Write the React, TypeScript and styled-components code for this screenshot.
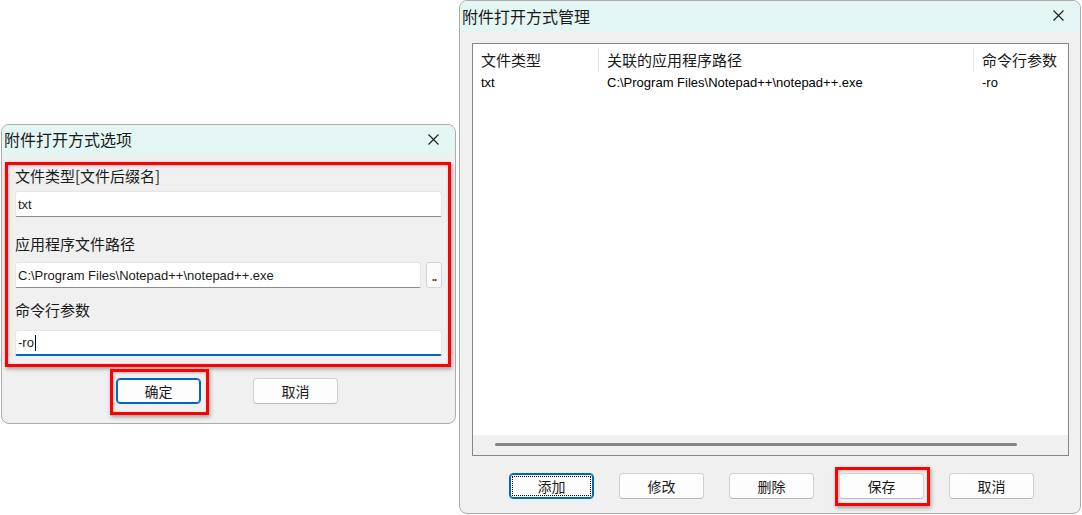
import React from 'react';
import styled, { createGlobalStyle } from 'styled-components';

const GlobalStyle = createGlobalStyle`
  html, body {
    margin: 0;
    padding: 0;
    background: #ffffff;
    overflow: hidden;
  }
  body {
    font-family: "Noto Sans CJK SC", "Liberation Sans", sans-serif;
    color: #1a1a1a;
  }
  * { box-sizing: border-box; }
`;

const Page = styled.div`
  display: flex;
  align-items: flex-start;
  gap: 3px;
  padding-left: 1px;
  width: 1082px;
  height: 515px;
`;

const Dialog = styled.div<{ $w: number; $h: number; $top?: number }>`
  display: flex;
  flex-direction: column;
  width: ${p => p.$w}px;
  height: ${p => p.$h}px;
  margin-top: ${p => p.$top ?? 0}px;
  background: #f0f0f0;
  border: 1px solid #ababab;
  border-radius: 8px;
  overflow: hidden;
`;

const TitleBar = styled.div<{ $h: number }>`
  display: flex;
  align-items: center;
  justify-content: space-between;
  flex-shrink: 0;
  height: ${p => p.$h}px;
  padding: 0 16px 2px 2px;
  background: #e4f6f4;
`;

const Title = styled.span`
  font-size: 16px;
  line-height: 20px;
  color: #1a1a1a;
`;

const CloseIcon = () => (
  <svg width="11" height="11" viewBox="0 0 11 11">
    <path d="M0.5 0.5 L10.5 10.5 M10.5 0.5 L0.5 10.5" stroke="#1b1b1b" strokeWidth="1.1" fill="none" />
  </svg>
);

/* red annotation frames */
const Frame = styled.div`
  border: 3px solid #ff0000;
  box-shadow: 1px 2px 4px rgba(0, 0, 0, 0.35), inset 1px 1px 3px rgba(0, 0, 0, 0.22);
`;

const FieldGroup = styled(Frame)`
  display: flex;
  flex-direction: column;
  margin: 7px 4px 0 3px;
  padding: 0 6px 8px 7px;
`;

// frame around a single button; negative margins keep the button where it sits
const Mark = styled(Frame)<{ $t: number; $r: number; $b: number; $l: number }>`
  padding: ${p => `${p.$t}px ${p.$r}px ${p.$b}px ${p.$l}px`};
  margin: ${p => `-${p.$t + 3}px -${p.$r + 3}px -${p.$b + 3}px -${p.$l + 3}px`};
`;

const Label = styled.div<{ $above: number; $below: number }>`
  margin-top: ${p => p.$above}px;
  margin-bottom: ${p => p.$below}px;
  font-size: 15px;
  line-height: 20px;
  color: #1a1a1a;
`;

const TextBox = styled.div<{ $focused?: boolean }>`
  flex: 1;
  display: flex;
  align-items: center;
  height: 26px;
  padding: 0 2px;
  background: #ffffff;
  border: 1px solid #e6e6e6;
  border-bottom: ${p => (p.$focused ? '2px solid #0067c0' : '1px solid #8a8a8a')};
  border-radius: 3px 3px 2px 2px;
  font-family: "Liberation Sans", Arial, sans-serif;
  font-size: 13px;
  color: #1a1a1a;
  white-space: nowrap;
`;

const Caret = styled.span`
  display: inline-block;
  width: 1px;
  height: 16px;
  margin-left: 1px;
  background: #000000;
`;

const InputRow = styled.div`
  display: flex;
  gap: 5px;
`;

const BrowseButton = styled.div`
  display: flex;
  align-items: flex-end;
  justify-content: center;
  width: 16px;
  height: 26px;
  padding-bottom: 6px;
  background: #fbfbfb;
  border: 1px solid #d3d3d3;
  border-radius: 3px;
  font-family: "Liberation Sans", Arial, sans-serif;
  font-size: 12px;
  line-height: 8px;
  font-weight: bold;
  color: #6a4020;
  letter-spacing: -1px;
`;

const ButtonRow = styled.div<{ $top: number; $left: number; $gap: number }>`
  display: flex;
  align-items: flex-start;
  gap: ${p => p.$gap}px;
  margin-top: ${p => p.$top}px;
  padding-left: ${p => p.$left}px;
`;

const Button = styled.div<{ $focused?: boolean; $dotted?: boolean }>`
  display: flex;
  align-items: center;
  justify-content: center;
  width: 85px;
  height: 26px;
  padding-bottom: 1px;
  background: #fdfdfd;
  border: 1px solid ${p => (p.$focused ? '#0067c0' : '#d0d0d0')};
  border-bottom-color: ${p => (p.$focused ? '#0067c0' : '#b8b8b8')};
  border-radius: 4px;
  box-shadow: ${p => (p.$focused ? 'inset 0 0 0 1px #0067c0' : 'none')};
  outline: ${p => (p.$dotted ? '1px dotted #000000' : 'none')};
  outline-offset: -4px;
  font-size: 14px;
  line-height: 18px;
  color: #1a1a1a;
`;

/* list view of the management dialog */
const ListBox = styled.div`
  display: flex;
  flex-direction: column;
  height: 413px;
  margin: 11px 11px 0 12px;
  background: #ffffff;
  border: 1px solid #868686;
`;

const HeaderRow = styled.div`
  display: flex;
  padding-top: 4px;
`;

const HeaderCell = styled.div<{ $w?: number; $sep?: boolean }>`
  ${p => (p.$w ? `width: ${p.$w}px;` : 'flex: 1;')}
  height: 24px;
  padding-left: 8px;
  border-right: ${p => (p.$sep ? '1px solid #e5e5e5' : 'none')};
  font-size: 15px;
  line-height: 23px;
  color: #1a1a1a;
`;

const DataRow = styled.div`
  display: flex;
  margin-top: 2px;
  height: 18px;
`;

const DataCell = styled.div<{ $w?: number }>`
  ${p => (p.$w ? `width: ${p.$w}px;` : 'flex: 1;')}
  padding-left: 8px;
  font-family: "Liberation Sans", Arial, sans-serif;
  font-size: 13px;
  line-height: 18px;
  color: #000000;
  white-space: nowrap;
`;

const ListSpace = styled.div`
  flex: 1;
`;

const HScroll = styled.div`
  display: flex;
  height: 20px;
  padding: 8px 0 0 22px;
  background: #f0f0f0;
`;

const ScrollThumb = styled.div`
  width: 522px;
  height: 3px;
  border-radius: 2px;
  background: #858585;
`;

const OptionsDialog = () => (
  <Dialog $w={455} $h={300} $top={124}>
    <TitleBar $h={30}>
      <Title>附件打开方式选项</Title>
      <CloseIcon />
    </TitleBar>
    <FieldGroup>
      <Label $above={1} $below={5}>文件类型[文件后缀名]</Label>
      <InputRow>
        <TextBox>txt</TextBox>
      </InputRow>
      <Label $above={17} $below={8}>应用程序文件路径</Label>
      <InputRow>
        <TextBox>C:\Program Files\Notepad++\notepad++.exe</TextBox>
        <BrowseButton>..</BrowseButton>
      </InputRow>
      <Label $above={12} $below={10}>命令行参数</Label>
      <InputRow>
        <TextBox $focused>
          -ro<Caret />
        </TextBox>
      </InputRow>
    </FieldGroup>
    <ButtonRow $top={11} $left={114} $gap={52}>
      <Mark $t={6} $r={5} $b={8} $l={3}>
        <Button $focused>确定</Button>
      </Mark>
      <Button>取消</Button>
    </ButtonRow>
  </Dialog>
);

const ManageDialog = () => (
  <Dialog $w={622} $h={514}>
    <TitleBar $h={31}>
      <Title>附件打开方式管理</Title>
      <CloseIcon />
    </TitleBar>
    <ListBox>
      <HeaderRow>
        <HeaderCell $w={126} $sep>文件类型</HeaderCell>
        <HeaderCell $w={375} $sep>关联的应用程序路径</HeaderCell>
        <HeaderCell>命令行参数</HeaderCell>
      </HeaderRow>
      <DataRow>
        <DataCell $w={126}>txt</DataCell>
        <DataCell $w={375}>C:\Program Files\Notepad++\notepad++.exe</DataCell>
        <DataCell>-ro</DataCell>
      </DataRow>
      <ListSpace />
      <HScroll>
        <ScrollThumb />
      </HScroll>
    </ListBox>
    <ButtonRow $top={17} $left={49} $gap={25}>
      <Button $focused $dotted>添加</Button>
      <Button>修改</Button>
      <Button>删除</Button>
      <Mark $t={3} $r={3} $b={4} $l={1}>
        <Button>保存</Button>
      </Mark>
      <Button>取消</Button>
    </ButtonRow>
  </Dialog>
);

const App: React.FC = () => (
  <>
    <GlobalStyle />
    <Page>
      <OptionsDialog />
      <ManageDialog />
    </Page>
  </>
);

export default App;
